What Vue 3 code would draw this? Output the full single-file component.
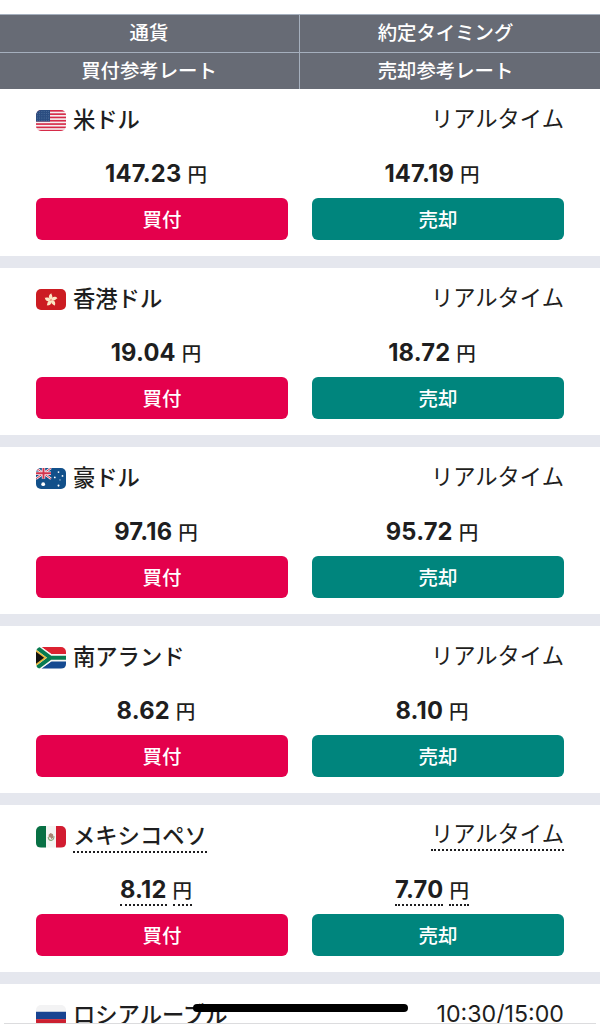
<script setup>
const rows = [
  { flag: 'us', name: '米ドル', timing: 'リアルタイム', buy: '147.23', sell: '147.19' },
  { flag: 'hk', name: '香港ドル', timing: 'リアルタイム', buy: '19.04', sell: '18.72' },
  { flag: 'au', name: '豪ドル', timing: 'リアルタイム', buy: '97.16', sell: '95.72' },
  { flag: 'za', name: '南アランド', timing: 'リアルタイム', buy: '8.62', sell: '8.10' },
  { flag: 'mx', name: 'メキシコペソ', timing: 'リアルタイム', buy: '8.12', sell: '7.70', noted: true },
  { flag: 'ru', name: 'ロシアルーブル', timing: '10:30/15:00', hours: true },
]
</script>

<template>
  <div class="screen">
    <header class="head">
      <div class="head-cell">通貨</div>
      <div class="head-cell right">約定タイミング</div>
      <div class="head-cell">買付参考レート</div>
      <div class="head-cell right">売却参考レート</div>
    </header>

    <main class="list">
      <section v-for="row in rows" :key="row.flag" class="card" :class="{ noted: row.noted }">
        <div class="top">
          <svg class="flag" viewBox="0 0 30 21" preserveAspectRatio="none" aria-hidden="true">
            <g v-if="row.flag === 'us'">
              <rect width="30" height="21" fill="#f6f1f2" />
              <rect v-for="n in 7" :key="n" :y="(n - 1) * 3.23" width="30" height="1.62" fill="#d62b49" />
              <rect width="14" height="11.3" fill="#2b4d80" />
              <g fill="#7d9abd">
                <template v-for="r in 5" :key="r">
                  <circle v-for="c in 6" :key="c" :cx="c * 2.2 - 0.7" :cy="r * 2.1 - 0.6" r=".4" />
                </template>
              </g>
            </g>
            <g v-else-if="row.flag === 'hk'">
              <rect width="30" height="21" fill="#cc1c22" />
              <g fill="#fbe6c4">
                <path
                  v-for="n in 5"
                  :key="n"
                  d="M15 10.8C12.2 9.2 12.1 5.6 15.4 4.1C15.2 5.8 18 7.3 15 10.8Z"
                  :transform="`rotate(${n * 72} 15 10.8)`"
                />
              </g>
              <circle cx="15" cy="10.8" r=".7" fill="#d96a50" />
            </g>
            <g v-else-if="row.flag === 'au'">
              <rect width="30" height="21" fill="#12508a" />
              <path d="M0 0L15 10.5M15 0L0 10.5" stroke="#f3e9ef" stroke-width="2.4" />
              <path d="M0 0L15 10.5M15 0L0 10.5" stroke="#d3334c" stroke-width=".9" />
              <path d="M7.5 0V10.5M0 5.2H15" stroke="#f3e9ef" stroke-width="3.4" />
              <path d="M7.5 0V10.5M0 5.2H15" stroke="#d3334c" stroke-width="1.9" />
              <g fill="#fff">
                <circle cx="7.2" cy="15.8" r="1.9" />
                <circle cx="22.5" cy="4" r=".9" />
                <circle cx="18.8" cy="9.2" r=".9" />
                <circle cx="26.5" cy="7.7" r=".9" />
                <circle cx="24" cy="11.6" r=".5" />
                <circle cx="22.5" cy="17.2" r="1" />
              </g>
            </g>
            <g v-else-if="row.flag === 'za'">
              <rect width="30" height="21" fill="#f7f7f5" />
              <path d="M7 0H30V6.8H15.4L5.5 0Z" fill="#dc2231" />
              <path d="M5.5 21L15.4 14.2H30V21Z" fill="#154a91" />
              <path d="M0 0L14.5 10.5L0 21M14 10.5H30" fill="none" stroke="#f7f7f5" stroke-width="6.5" />
              <path d="M0 0L14.5 10.5L0 21M14 10.5H30" fill="none" stroke="#087b50" stroke-width="4" />
              <path d="M0 2.6L10.9 10.5L0 18.4Z" fill="#e8b83c" />
              <path d="M0 4.6L8.1 10.5L0 16.4Z" fill="#121212" />
            </g>
            <g v-else-if="row.flag === 'mx'">
              <rect width="30" height="21" fill="#f4f4f2" />
              <rect width="10" height="21" fill="#087044" />
              <rect x="20" width="10" height="21" fill="#d21c31" />
              <path d="M12.2 10.6Q12.5 14.2 15.3 14Q18.2 13.4 17.9 9.9" fill="none" stroke="#86a678" stroke-width="1.1" />
              <path d="M12.6 8.6L14.6 6.8L17 8L17.5 11L15.5 13L14.3 11L12.8 11.2Z" fill="#a78573" />
            </g>
            <g v-else>
              <rect width="30" height="21" fill="#f3f3f4" />
              <rect y="6.6" width="30" height="7.2" fill="#174391" />
              <rect y="13.8" width="30" height="7.2" fill="#cb2030" />
            </g>
          </svg>
          <h2 class="name"><span class="mark">{{ row.name }}</span></h2>
          <span class="timing" :class="{ hours: row.hours }"><span class="mark">{{ row.timing }}</span></span>
        </div>
        <div v-if="row.buy" class="trade">
          <p class="price"><b class="mark">{{ row.buy }}</b><span class="yen mark">円</span></p>
          <p class="price"><b class="mark">{{ row.sell }}</b><span class="yen mark">円</span></p>
          <button class="btn buy">買付</button>
          <button class="btn sell">売却</button>
        </div>
      </section>
    </main>

    <div class="home-bar"></div>
    <div class="bottom-line"></div>
  </div>
</template>

<style>
body {
  margin: 0;
  background: #fff;
}
</style>

<style scoped>
.screen {
  position: relative;
  box-sizing: border-box;
  width: 600px;
  height: 1024px;
  padding-top: 14px;
  overflow: hidden;
  background: #fff;
  color: #1e1e20;
  font-family: Inter, "Noto Sans CJK JP", sans-serif;
}

.head {
  display: grid;
  grid-template-columns: 300px 300px;
  grid-template-rows: 37.5px 37.5px;
}

.head-cell {
  box-sizing: border-box;
  border-top: 1px solid #a5afbd;
  border-right: 1px solid #a5afbd;
  background: #676b75;
  color: #fff;
  font-size: 19.4px;
  font-weight: 500;
  line-height: 37px;
  text-align: center;
}

.head-cell:not(.right) {
  padding-right: 1px;
}

.head-cell.right {
  padding-right: 9px;
  border-right: 0;
}

.card {
  box-sizing: border-box;
  height: 179.1px;
  padding: 0 36px;
  border-bottom: 12px solid #e5e7ee;
}

.top {
  display: flex;
  align-items: center;
  height: 62px;
}

.flag {
  width: 30px;
  height: 21.5px;
  margin: 1px 7px 0 0;
  border-radius: 5px;
}

.name {
  margin: 0;
  font-size: 22.3px;
  font-weight: 500;
  line-height: 32px;
}

.timing {
  margin: -3px 0 0 auto;
  font-size: 22.3px;
  line-height: 32px;
}

.hours {
  margin-top: -2px;
  font-size: 23.2px;
}

.mark {
  display: inline-block;
}

.trade {
  display: grid;
  grid-template-columns: 252px 252px;
  grid-template-rows: 47px 42px;
  column-gap: 24px;
}

.price {
  display: flex;
  justify-content: center;
  align-items: baseline;
  gap: 6px;
  margin: 6px 12px 0 0;
  font-size: 23.7px;
  line-height: 34px;
}

.price b {
  font-weight: 700;
  letter-spacing: 0.2px;
}

.yen {
  font-size: 19.5px;
  font-weight: 500;
}

.btn {
  padding: 2px 0 0;
  border: 0;
  border-radius: 6px;
  color: #fff;
  font-family: inherit;
  font-size: 19.5px;
  font-weight: 500;
  line-height: 40px;
}

.buy {
  background: #e4004c;
}

.sell {
  background: #00857d;
}

.noted .mark {
  line-height: 30px;
  border-bottom: 2px dotted #1e1e20;
}

.noted .price {
  margin-top: 9px;
}

.noted .price .mark {
  line-height: 28px;
}

.noted .price .yen {
  line-height: 26px;
}

.home-bar {
  position: absolute;
  top: 1004px;
  left: 193px;
  width: 215px;
  height: 8px;
  border-radius: 4px;
  background: #000;
}

.bottom-line {
  position: absolute;
  right: 4px;
  bottom: 0;
  left: 4px;
  height: 1px;
  background: #dcdcde;
}
</style>
